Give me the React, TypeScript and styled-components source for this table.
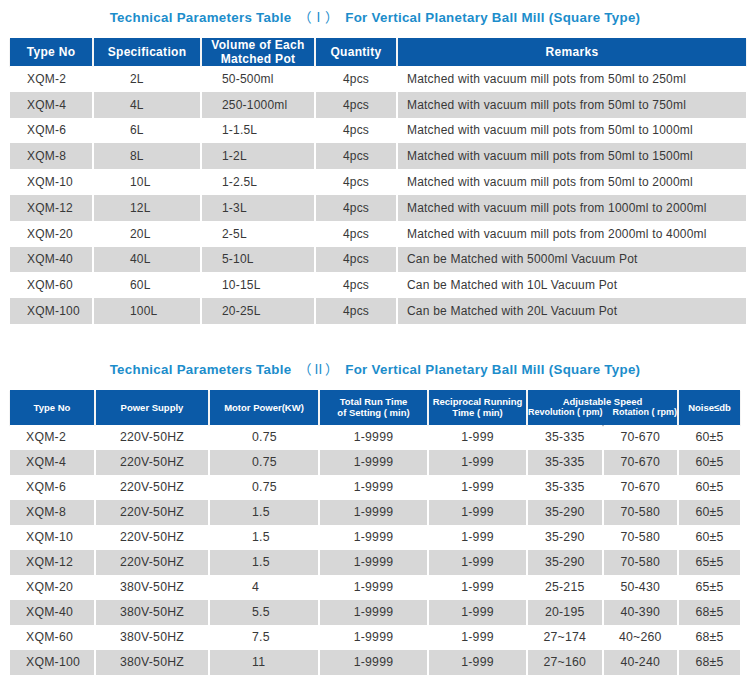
import React from "react"
import styled, { createGlobalStyle } from "styled-components"

const GlobalStyle = createGlobalStyle`
  body {
    margin: 0;
    background: #ffffff;
    font-family: "Liberation Sans", Arial, sans-serif;
  }
`

const Page = styled.div`
  width: 750px;
  padding: 8px 0 0 8px;
  box-sizing: border-box;
`

const Title = styled.h2<{ $gap: number }>`
  margin: ${(p) => p.$gap}px 0 0;
  width: 734px;
  text-align: center;
  font-size: 13.3px;
  font-weight: bold;
  color: #1c8dcb;
  line-height: 18px;
  letter-spacing: 0.3px;
  .paren {
    font-family: "Noto Sans CJK SC", "Liberation Sans", sans-serif;
    font-weight: normal;
    letter-spacing: 0;
    margin: 0 3px;
  }
`

const Table = styled.table<{ $top: number }>`
  margin-top: ${(p) => p.$top}px;
  border-collapse: separate;
  border-spacing: 2px 0;
  table-layout: fixed;
  color: #333333;
`

const HeadCell = styled.th<{ $w: number; $h: number; $size: number; $track: number }>`
  width: ${(p) => p.$w}px;
  height: ${(p) => p.$h}px;
  padding: 0;
  background: #0b5aa7;
  color: #ffffff;
  font-size: ${(p) => p.$size}px;
  font-weight: bold;
  letter-spacing: ${(p) => p.$track}px;
  text-align: center;
  line-height: ${(p) => Math.round(p.$size * 1.15)}px;
  box-shadow: 0 1px 1px rgba(0, 0, 0, 0.25);
  vertical-align: middle;
  white-space: nowrap;
`

const SpeedHead = styled.div`
  display: flex;
  justify-content: space-between;
  white-space: nowrap;
  font-size: 9px;
  letter-spacing: 0;
`

const Row = styled.tr<{ $shade: boolean; $h: number }>`
  height: ${(p) => p.$h}px;
  td {
    background: ${(p) => (p.$shade ? "#d7d7d7" : "#ffffff")};
  }
`

const Cell = styled.td<{ $align: "left" | "center"; $pad: number; $size: number }>`
  padding: 0 0 0 ${(p) => p.$pad}px;
  text-align: ${(p) => p.$align};
  font-size: ${(p) => p.$size}px;
  letter-spacing: 0.2px;
  white-space: nowrap;
  overflow: hidden;
  vertical-align: middle;
  color: #383838;
`

type Col = { w: number; align: "left" | "center"; pad: number }

const cols1: Col[] = [
  { w: 82, align: "left", pad: 17 },
  { w: 106, align: "left", pad: 36 },
  { w: 112, align: "left", pad: 20 },
  { w: 80, align: "center", pad: 0 },
  { w: 348, align: "left", pad: 9 },
]

const rows1 = [
  ["XQM-2", "2L", "50-500ml", "4pcs", "Matched with vacuum mill pots from 50ml to 250ml"],
  ["XQM-4", "4L", "250-1000ml", "4pcs", "Matched with vacuum mill pots from 50ml to 750ml"],
  ["XQM-6", "6L", "1-1.5L", "4pcs", "Matched with vacuum mill pots from 50ml to 1000ml"],
  ["XQM-8", "8L", "1-2L", "4pcs", "Matched with vacuum mill pots from 50ml to 1500ml"],
  ["XQM-10", "10L", "1-2.5L", "4pcs", "Matched with vacuum mill pots from 50ml to 2000ml"],
  ["XQM-12", "12L", "1-3L", "4pcs", "Matched with vacuum mill pots from 1000ml to 2000ml"],
  ["XQM-20", "20L", "2-5L", "4pcs", "Matched with vacuum mill pots from 2000ml to 4000ml"],
  ["XQM-40", "40L", "5-10L", "4pcs", "Can be Matched with 5000ml Vacuum Pot"],
  ["XQM-60", "60L", "10-15L", "4pcs", "Can be Matched with 10L Vacuum Pot"],
  ["XQM-100", "100L", "20-25L", "4pcs", "Can be Matched with 20L Vacuum Pot"],
]

const cols2: Col[] = [
  { w: 84, align: "left", pad: 16 },
  { w: 112, align: "center", pad: 0 },
  { w: 108, align: "left", pad: 42 },
  { w: 107, align: "center", pad: 0 },
  { w: 97, align: "center", pad: 0 },
  { w: 71, align: "center", pad: 0 },
  { w: 76, align: "center", pad: 0 },
  { w: 61, align: "center", pad: 0 },
]

const rows2 = [
  ["XQM-2", "220V-50HZ", "0.75", "1-9999", "1-999", "35-335", "70-670", "60±5"],
  ["XQM-4", "220V-50HZ", "0.75", "1-9999", "1-999", "35-335", "70-670", "60±5"],
  ["XQM-6", "220V-50HZ", "0.75", "1-9999", "1-999", "35-335", "70-670", "60±5"],
  ["XQM-8", "220V-50HZ", "1.5", "1-9999", "1-999", "35-290", "70-580", "60±5"],
  ["XQM-10", "220V-50HZ", "1.5", "1-9999", "1-999", "35-290", "70-580", "60±5"],
  ["XQM-12", "220V-50HZ", "1.5", "1-9999", "1-999", "35-290", "70-580", "65±5"],
  ["XQM-20", "380V-50HZ", "4", "1-9999", "1-999", "25-215", "50-430", "65±5"],
  ["XQM-40", "380V-50HZ", "5.5", "1-9999", "1-999", "20-195", "40-390", "68±5"],
  ["XQM-60", "380V-50HZ", "7.5", "1-9999", "1-999", "27~174", "40~260", "68±5"],
  ["XQM-100", "380V-50HZ", "11", "1-9999", "1-999", "27~160", "40-240", "68±5"],
]

function TitleLine({ numeral, gap }: { numeral: string; gap: number }) {
  return (
    <Title $gap={gap}>
      Technical Parameters Table <span className="paren">（{numeral}）</span> For Vertical
      Planetary Ball Mill (Square Type)
    </Title>
  )
}

function BodyRows({ rows, cols, h, size }: { rows: string[][]; cols: Col[]; h: number; size: number }) {
  return (
    <tbody>
      {rows.map((r, i) => (
        <Row key={r[0]} $shade={i % 2 === 1} $h={h}>
          {r.map((v, j) => (
            <Cell key={j} $align={cols[j].align} $pad={cols[j].pad} $size={size}>
              {v}
            </Cell>
          ))}
        </Row>
      ))}
    </tbody>
  )
}

export default function App() {
  const w1 = cols1.map((c) => c.w)
  const w2 = cols2.map((c) => c.w)
  return (
    <>
      <GlobalStyle />
      <Page>
        <TitleLine numeral="Ⅰ" gap={0} />
        <Table $top={11}>
          <thead>
            <tr>
              <HeadCell $w={w1[0]} $h={28} $size={12} $track={0.3}>Type No</HeadCell>
              <HeadCell $w={w1[1]} $h={28} $size={12} $track={0.3}>Specification</HeadCell>
              <HeadCell $w={w1[2]} $h={28} $size={12} $track={0.3}>
                Volume of Each
                <br />
                Matched Pot
              </HeadCell>
              <HeadCell $w={w1[3]} $h={28} $size={12} $track={0.3}>Quantity</HeadCell>
              <HeadCell $w={w1[4]} $h={28} $size={12} $track={0.3}>Remarks</HeadCell>
            </tr>
          </thead>
          <BodyRows rows={rows1} cols={cols1} h={25.8} size={12} />
        </Table>

        <TitleLine numeral="Ⅱ" gap={36} />
        <Table $top={11}>
          <thead>
            <tr>
              <HeadCell $w={w2[0]} $h={35} $size={9.5} $track={0}>Type No</HeadCell>
              <HeadCell $w={w2[1]} $h={35} $size={9.5} $track={0}>Power Supply</HeadCell>
              <HeadCell $w={w2[2]} $h={35} $size={9.5} $track={0}>Motor Power(KW)</HeadCell>
              <HeadCell $w={w2[3]} $h={35} $size={9.5} $track={0}>
                Total Run Time
                <br />
                of Setting ( min)
              </HeadCell>
              <HeadCell $w={w2[4]} $h={35} $size={9.5} $track={0}>
                Reciprocal Running
                <br />
                Time ( min)
              </HeadCell>
              <HeadCell $w={w2[5] + w2[6] + 2} $h={35} $size={9.5} $track={0} colSpan={2}>
                Adjustable Speed
                <SpeedHead>
                  <span>Revolution ( rpm)</span>
                  <span>Rotation ( rpm)</span>
                </SpeedHead>
              </HeadCell>
              <HeadCell $w={w2[7]} $h={35} $size={9.5} $track={0}>Noise≤db</HeadCell>
            </tr>
          </thead>
          <BodyRows rows={rows2} cols={cols2} h={25} size={12.3} />
        </Table>
      </Page>
    </>
  )
}
